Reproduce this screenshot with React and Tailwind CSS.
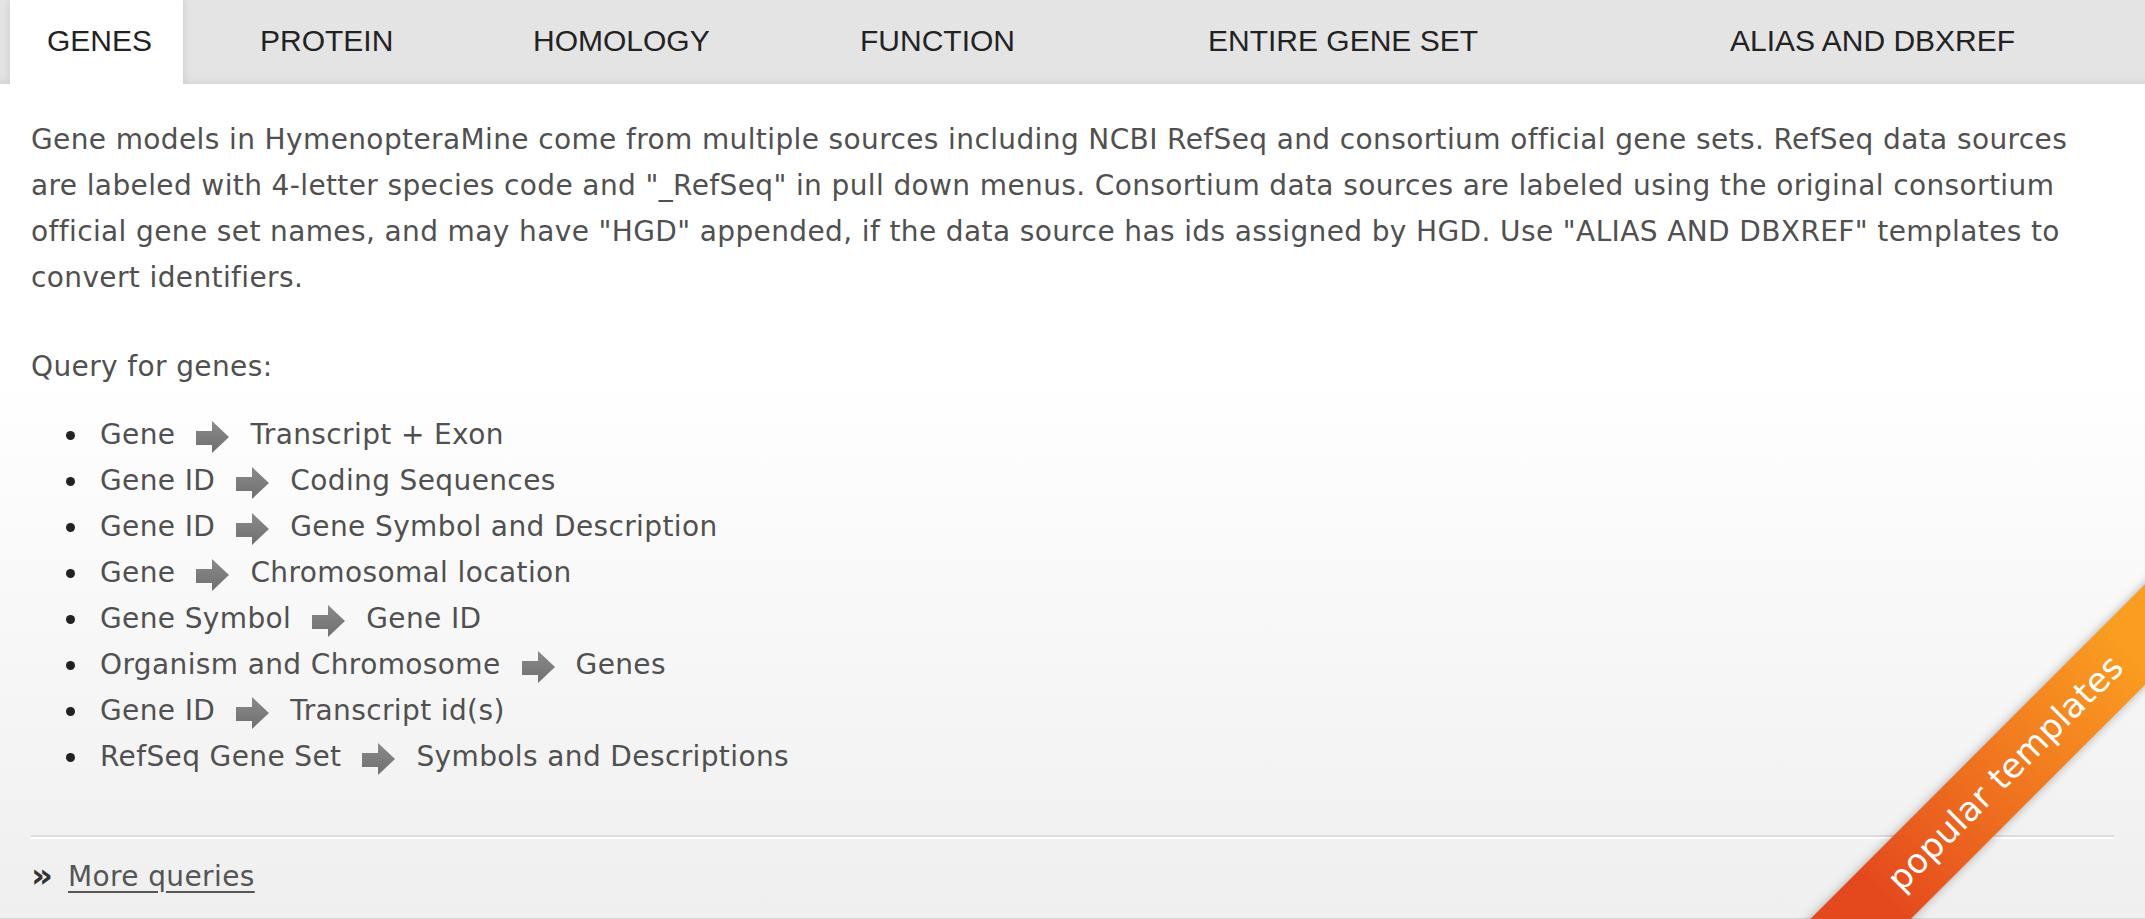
import React from "react";

const tabs = [
  { label: "PROTEIN", w: "w-[273px]" },
  { label: "HOMOLOGY", w: "w-[327px]" },
  { label: "FUNCTION", w: "w-[348px]" },
  { label: "ENTIRE GENE SET", w: "w-[522px]" },
  { label: "ALIAS AND DBXREF", w: "flex-1" },
];

const queries = [
  ["Gene", "Transcript + Exon"],
  ["Gene ID", "Coding Sequences"],
  ["Gene ID", "Gene Symbol and Description"],
  ["Gene", "Chromosomal location"],
  ["Gene Symbol", "Gene ID"],
  ["Organism and Chromosome", "Genes"],
  ["Gene ID", "Transcript id(s)"],
  ["RefSeq Gene Set", "Symbols and Descriptions"],
];

function Arrow() {
  return (
    <svg width="33" height="32" viewBox="0 0 33 32" className="mx-[21px] mt-[9px] shrink-0">
      <defs>
        <linearGradient id="arr" x1="0" y1="0" x2="0" y2="1">
          <stop offset="0" stopColor="#8a8a8a" />
          <stop offset="1" stopColor="#6f6f6f" />
        </linearGradient>
      </defs>
      <polygon points="0,10 16,10 16,0 33,16 16,32 16,24 0,24" fill="url(#arr)" />
    </svg>
  );
}

export default function App() {
  return (
    <div className="relative h-[919px] w-full overflow-hidden flex flex-col bg-[#e0e0e0]">
      {/* Tabs */}
      <div className="h-[84px] flex bg-[#e4e4e4] shadow-[inset_0_-8px_8px_-6px_rgba(0,0,0,0.08)] font-['Liberation_Sans',Arial,sans-serif] text-[30px] text-[#222]">
        <div className="ml-[10px] w-[173px] bg-white pl-[37px] flex items-center pb-[3px] shadow-[0_0_8px_rgba(0,0,0,0.12)] relative z-10">
          GENES
        </div>
        <div className="w-[77px]" />
        {tabs.map((t) => (
          <div key={t.label} className={`${t.w} flex items-center pb-[3px] whitespace-nowrap`}>
            {t.label}
          </div>
        ))}
      </div>

      {/* Content */}
      <div className="relative z-20 flex-1 bg-linear-to-b from-white from-35% to-[#efefef] border-b border-[#d6d6d6] px-[31px] pt-[33px] font-['DejaVu_Sans',Verdana,sans-serif] text-[28px] tracking-[0.38px] leading-[46px] text-[#505050]">
        <p>
          Gene models in HymenopteraMine come from multiple sources including NCBI RefSeq and consortium official gene
          sets. RefSeq data sources are labeled with 4-letter species code and "_RefSeq" in pull down menus. Consortium
          data sources are labeled using the original consortium official gene set names, and may have "HGD" appended,
          if the data source has ids assigned by HGD. Use "ALIAS AND DBXREF" templates to convert identifiers.
        </p>

        <p className="mt-[43px]">Query for genes:</p>

        <ul className="mt-[22px]">
          {queries.map(([from, to], i) => (
            <li key={i} className="flex items-start h-[46px]">
              <span className="ml-[35px] mt-[19px] w-[9px] h-[9px] rounded-full bg-[#222] shrink-0" />
              <span className="ml-[25px] whitespace-nowrap">{from}</span>
              <Arrow />
              <span className="whitespace-nowrap">{to}</span>
            </li>
          ))}
        </ul>

        <div className="mt-[55px] border-t-2 border-[#dcdcdc] border-b-2 border-b-white" />

        <div className="mt-[15px] flex items-center">
          <span className="w-[21px] font-bold text-[34px] text-[#333] leading-none mb-[5px] tracking-normal">»</span>
          <a href="#" className="ml-[16px] underline underline-offset-[5px] text-[#555]">
            More queries
          </a>
        </div>

        {/* corner ribbon */}
        <div className="absolute left-[1656px] top-[654px] w-[700px] h-[71px] -rotate-45 bg-linear-to-r from-[#e4491d] from-25% to-[#fa9d20] to-75% shadow-[0_0_10px_rgba(0,0,0,0.3)] flex items-center justify-center text-white text-[34px] tracking-[0.3px] font-['DejaVu_Sans',sans-serif] leading-none pb-[4px]">
          popular templates
        </div>
      </div>
    </div>
  );
}
